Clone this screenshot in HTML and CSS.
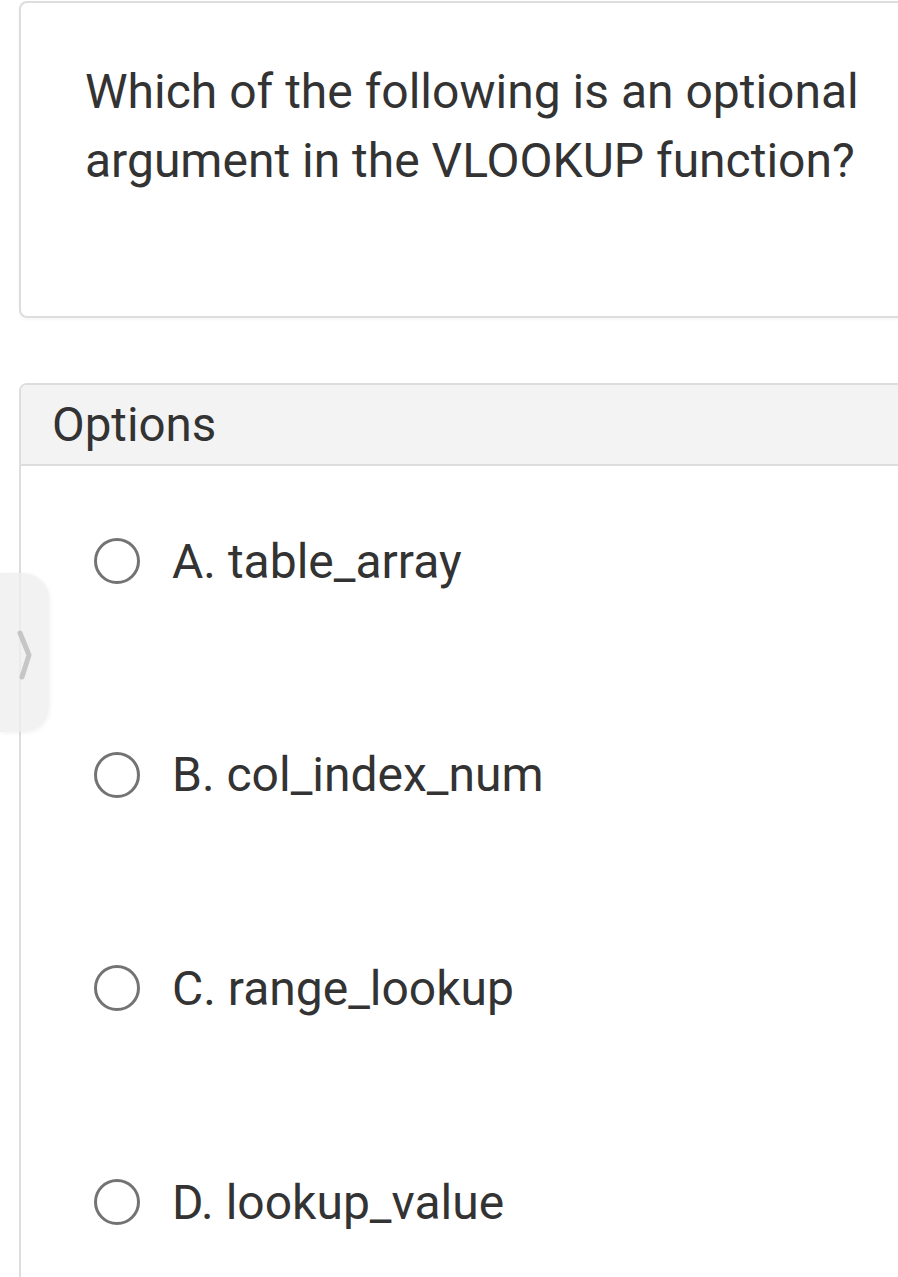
FILE: index.html
```html
<!DOCTYPE html>
<html>
<head>
<meta charset="utf-8">
<link rel="stylesheet" href="styles.css">
</head>
<body>
<div class="page">
  <section class="question-card">
    <p class="question-text">Which of the following is an optional argument in the VLOOKUP function?</p>
  </section>
  <section class="options-card">
    <div class="options-header">Options</div>
    <ul class="options-list">
      <li class="option"><span class="radio"></span><span class="option-label">A. table_array</span></li>
      <li class="option"><span class="radio"></span><span class="option-label">B. col_index_num</span></li>
      <li class="option"><span class="radio"></span><span class="option-label">C. range_lookup</span></li>
      <li class="option"><span class="radio"></span><span class="option-label">D. lookup_value</span></li>
    </ul>
  </section>
</div>
<div class="side-tab">
  <svg class="chevron" width="20" height="56" viewBox="0 0 20 56"><path d="M8 8 L17 30 L10 52" fill="none" stroke="#c6c6c6" stroke-width="5" stroke-linecap="round" stroke-linejoin="round"/></svg>
</div>
</body>
</html>
```
FILE: styles.css
```css
html, body {
  margin: 0;
  padding: 0;
  background: #ffffff;
  overflow: hidden;
}
body {
  font-family: Roboto, "Liberation Sans", sans-serif;
  color: #333333;
  width: 898px;
  height: 1277px;
  position: relative;
}
.page {
  padding-top: 1px;
  padding-left: 19px;
}
.question-card {
  width: 1000px;
  box-sizing: border-box;
  height: 317px;
  border: 2px solid #dddddd;
  border-radius: 8px;
  padding: 54px 0 0 64px;
  box-shadow: 0 2px 3px rgba(0,0,0,0.04);
}
.question-text {
  margin: 0;
  width: 800px;
  font-size: 48px;
  line-height: 69px;
  color: #333333;
}
.options-card {
  margin-top: 65px;
  width: 1000px;
  box-sizing: border-box;
  height: 1000px;
  border: 2px solid #dddddd;
  border-radius: 8px;
}
.options-header {
  background: #f3f3f3;
  border-bottom: 2px solid #dddddd;
  height: 81px;
  box-sizing: border-box;
  padding-left: 31px;
  display: flex;
  align-items: center;
  font-size: 47.5px;
  color: #333333;
  border-radius: 6px 6px 0 0;
}
.options-list {
  list-style: none;
  margin: 0;
  padding: 72px 0 0 73px;
  display: flex;
  flex-direction: column;
  gap: 167.7px;
}
.option {
  display: flex;
  align-items: center;
  height: 46px;
}
.radio {
  width: 46px;
  height: 46px;
  box-sizing: border-box;
  border: 3px solid #737373;
  border-radius: 50%;
  flex: none;
}
.option-label {
  margin-left: 32px;
  font-size: 48px;
  color: #333333;
  white-space: nowrap;
}
.side-tab {
  position: absolute;
  left: 0;
  top: 573px;
  width: 49px;
  height: 159px;
  background: rgba(238, 238, 238, 0.78);
  border-radius: 0 26px 26px 0;
  box-shadow: 1px 1px 4px rgba(0,0,0,0.06);
  display: flex;
  align-items: center;
  padding-left: 12px;
  box-sizing: border-box;
}
```
